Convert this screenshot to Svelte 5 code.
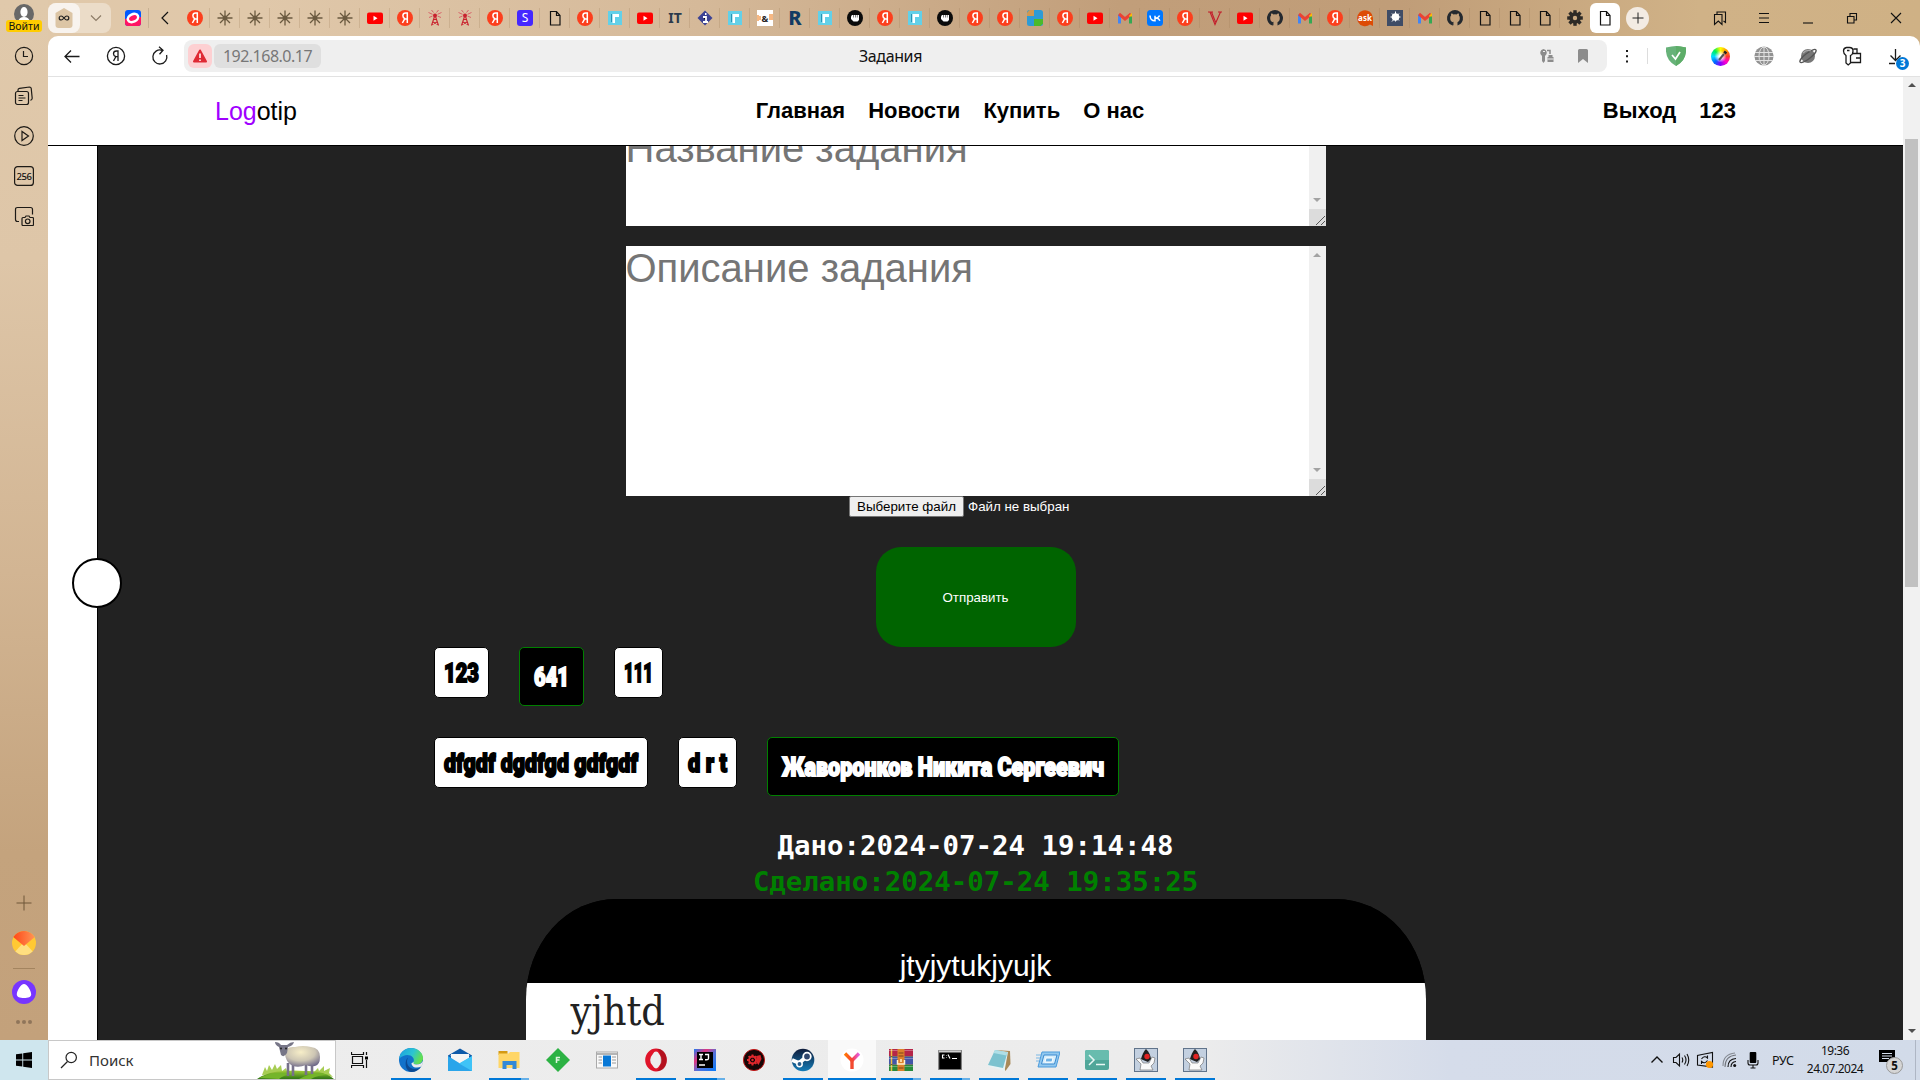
<script>
  const tabs = ('ya star star star star star yt ya tower tower ya s file ya r yt it info r amp bigr r fist ya r fist ya ya tiles ya yt gmail vk ya v yt git gmail ya ask dark gmail git file file file gear file').split(' ');

  const apps = [
    { icon: 'edge', run: 'one' },
    { icon: 'mail' },
    { icon: 'folder', run: 'many' },
    { icon: 'green' },
    { icon: 'window' },
    { icon: 'opera', run: 'one' },
    { icon: 'idea', run: 'many' },
    { icon: 'redgear' },
    { icon: 'steam', run: 'one' },
    { icon: 'yandex', run: 'active' },
    { icon: 'rar', run: 'many' },
    { icon: 'cmd', run: 'many' },
    { icon: 'note', run: 'one' },
    { icon: 'rundlg', run: 'one' },
    { icon: 'term', run: 'one' },
    { icon: 'duke', run: 'one' },
    { icon: 'duke', run: 'one' }
  ];

  const groups = [
    [
      { text: '123', w: 35 },
      { text: '641', w: 35, done: true },
      { text: '111', w: 29 }
    ],
    [
      { text: 'dfgdf dgdfgd gdfgdf', w: 194 },
      { text: 'd r t', w: 39 },
      { text: 'Жаворонков Никита Сергеевич', w: 322, done: true }
    ]
  ];

  const teeth = [0, 45, 90, 135, 180, 225, 270, 315];
</script>

{#snippet fav(name)}
  <svg class="fav" viewBox="0 0 16 16">
    {#if name === 'ya'}
      <circle cx="8" cy="8" r="8" fill="#fc3f1d" />
      <path d="M10.300 13V3H8.700C6.900 3 5.900 4.100 5.900 5.700c0 1.300.6 2.200 1.900 3L5.400 13M10 9H8" fill="none" stroke="#fff" stroke-width="1.500" />
    {:else if name === 'star'}
      <path d="M8 .5v15M.5 8h15M3 3l10 10M13 3L3 13" stroke="#6b5a40" stroke-width="1.300" />
      <circle cx="8" cy="8" r="2.400" fill="#6b5a40" />
    {:else if name === 'yt'}
      <rect x="0" y="2.500" width="16" height="11.500" rx="2" fill="#f00" />
      <path d="M6.500 5.800v5l4-2.500z" fill="#fff" />
    {:else if name === 'tower'}
      <path d="M8 5L4.500 15.500M8 5l3.500 10.500M6.500 9.500h3M6 12l5 2.500M10 12l-5 2.500" stroke="#c9222e" stroke-width="1.100" fill="none" />
      <path d="M1.500 2.500l4 1.800M14.500 2.500l-4 1.800M2 7.500l3.500-1.500M14 7.500L10.500 6M4.500 0l2 2.500M11.500 0l-2 2.500" stroke="#d8636a" stroke-width="1" />
      <circle cx="8" cy="5.500" r="2" fill="#c9222e" />
    {:else if name === 's'}
      <rect width="16" height="16" rx="3" fill="#4527ff" />
      <text x="8" y="12.200" text-anchor="middle" font-size="12" fill="#fff">S</text>
    {:else if name === 'file'}
      <path d="M3.500 1.500h6l3.500 4v9.500H3.500zM9.500 1.500v4H13" fill="none" stroke="#111" stroke-width="1.200" />
    {:else if name === 'r'}
      <rect x="1" y="1" width="14" height="14" fill="#63d0e8" />
      <path d="M5.500 4H8v9H5.500zM8 4h4v3H8z" fill="#fff" /><path d="M4.500 4v8" stroke="#2a93b5" stroke-width="1" />
    {:else if name === 'it'}
      <text x="8" y="13" text-anchor="middle" font-size="14" font-weight="700" fill="#2b3a4c">IT</text>
    {:else if name === 'info'}
      <path d="M8 .5L15.500 8 8 15.500.5 8z" fill="#3d4294" />
      <path d="M6 7h3v4.500M6 12h5M8 4h1.500" stroke="#fff" stroke-width="1.800" />
    {:else if name === 'amp'}
      <rect width="16" height="16" fill="#fff" />
      <path d="M1 5v6M3 6v4M13 4v6M15 4v6" stroke="#f3a05a" stroke-width="1.500" />
      <text x="8" y="11.500" text-anchor="middle" font-size="9" font-weight="700" fill="#222">&amp;</text>
    {:else if name === 'bigr'}
      <text x="8" y="15" text-anchor="middle" font-size="20" font-weight="800" fill="#123a63">R</text>
    {:else if name === 'fist'}
      <circle cx="8" cy="8" r="8" fill="#0b0b0b" />
      <path d="M4 6.500L5 5h7v5l-1.500 1.500h-4L4 9z" fill="#fff" /><path d="M6.500 5v2.500M8.500 5v2.500M10.300 5v2.500" stroke="#0b0b0b" stroke-width=".5" />
    {:else if name === 'tiles'}
      <rect width="16" height="16" rx="2.500" fill="#2e9bd6" />
      <path d="M2.500 0H7v6H0V2.500z" fill="#cf9853" /><path d="M7 9h9v4.500L13.500 16H7z" fill="#4aba2c" />
    {:else if name === 'gmail'}
      <path d="M2.500 13.500V4.500" stroke="#4285f4" stroke-width="3" /><path d="M13.500 13.500V4.500" stroke="#34a853" stroke-width="3" />
      <path d="M2 4l6 5 6-5" fill="none" stroke="#ea4335" stroke-width="3" /><path d="M12 5.700L15 3v3.500h-3z" fill="#fbbc04" />
    {:else if name === 'vk'}
      <rect width="16" height="16" rx="3.500" fill="#07f" />
      <path d="M3 5.500c.2 3.500 2 5.300 5 5.300v-5M8 8.200c2.200 0 3.800-1 4.600-2.700M9.500 7.900c1.500.3 2.700 1.300 3.400 2.900" fill="none" stroke="#fff" stroke-width="1.500" />
    {:else if name === 'v'}
      <path d="M1 2h5M11 2h4M3 2l5 12.500L13.500 2M4.500 2l4 10" fill="none" stroke="#c31f2b" stroke-width="1.100" />
    {:else if name === 'git'}
      <path d="M5.800 15.200v-2.500c-2 .5-2.500-.8-3.300-1.300" fill="none" stroke="#24292f" stroke-width="1.300" />
      <path d="M8 0a8 8 0 0 0-2.500 15.600V12.200C4 11.500 3.200 10.300 3.200 8c0-1 .3-1.900.9-2.500-.2-.8-.1-1.500.2-2.100 1 0 1.700.5 2.300 1a8 8 0 0 1 2.800 0c.6-.5 1.300-1 2.300-1 .3.600.4 1.300.2 2.100.6.600.9 1.500.9 2.500 0 2.300-.8 3.500-2.300 4.200v3.400A8 8 0 0 0 8 0z" fill="#24292f" />
    {:else if name === 'ask'}
      <path d="M16 8v8l-3-1.500A8 8 0 1 1 16 8z" fill="#dd4b05" />
      <text x="8" y="11" text-anchor="middle" font-size="8" font-weight="700" fill="#fff">ask</text>
    {:else if name === 'dark'}
      <rect width="16" height="16" fill="#3f4c66" /><circle cx="8.500" cy="7" r="3.800" fill="#fff" />
      <path d="M8.500 1.500v10M3.500 7h10M5 3.500l7 7M12 3.500l-7 8" stroke="#fff" stroke-width="1" />
    {:else if name === 'gear'}
      {#each teeth as a}<rect x="6.300" y=".2" width="3.400" height="4" fill="#2d2a26" transform="rotate({a} 8 8)" />{/each}
      <circle cx="8" cy="8" r="4" fill="none" stroke="#2d2a26" stroke-width="3.600" />
    {/if}
  </svg>
{/snippet}

{#snippet app(name)}
  <svg class="app-icon" viewBox="0 0 24 24">
    {#if name === 'edge'}
      <defs>
        <linearGradient id="eg1" x1="0" y1="0" x2="1" y2=".4"><stop offset="0" stop-color="#1b9de2" /><stop offset=".6" stop-color="#2cc4d2" /><stop offset="1" stop-color="#63df52" /></linearGradient>
      </defs>
      <circle cx="12" cy="12" r="12" fill="#1272cb" />
      <path d="M0 11C1 4 6 0 12 0c7 0 12 5 12 10 0 4-3 6.500-6.500 6.500-3 0-4-1-3-2.500C17 9 8 3 0 11z" fill="url(#eg1)" />
      <path d="M9 9.500c-3 6 1 11.500 7 11.500 3 0 5-1 6.500-2.500C20 22 16.500 24 12 24 6 23 5 13 9 9.500z" fill="#0c4a93" />
      <path d="M14.800 13.800c-1 1.500 0 3 3 2.800 2.600 0 4.800-1.200 6.200-3.600 0 2-.6 4-1.700 5.500-4 2-9 1.500-10-3z" fill="#ececec" />
    {:else if name === 'mail'}
      <path d="M0 7.500L12 .5l12 7V11H0z" fill="#0e5aa9" /><path d="M3 6h18v9H3z" fill="#f5f5f5" />
      <path d="M0 8l12 7.500L24 8v15H0z" fill="#2aa5ea" /><path d="M24 8v15L11 15.500z" fill="#3fc3f7" /><path d="M2 7.500h20L12 14z" fill="#f5f5f5" />
    {:else if name === 'folder'}
      <path d="M1.500 3h9v4h-9z" fill="#d49a13" /><path d="M1.500 5.500h10L13 4h9.500v16h-21z" fill="#ffd667" />
      <path d="M5.500 21v-8h14v8h-4v-4h-6v4z" fill="#3389d6" />
    {:else if name === 'green'}
      <path d="M12 0l12 12-12 12L0 12z" fill="#2cb244" /><path d="M10.500 15V9.500h3.500M10.500 12h3" fill="none" stroke="#dff5df" stroke-width="1.500" />
    {:else if name === 'window'}
      <rect x="1.500" y="4" width="21" height="16" fill="#f9f9f9" stroke="#aaa" /><path d="M2 6h20" stroke="#b5b5b5" stroke-width="2" /><path d="M3.500 9h3.500M3.500 12h3.500M3.500 15h3.500M17 9h4M17 12h4M17 15h4" stroke="#999" /><rect x="8" y="7.500" width="8" height="11" fill="#0878d6" />
    {:else if name === 'opera'}
      <ellipse cx="12" cy="12" rx="8.300" ry="9" fill="none" stroke="#e0142a" stroke-width="5" /><path d="M13 1c13-1 13 23 0 22 5-3 5-19 0-22z" fill="#9c1018" opacity=".65" />
      <ellipse cx="12" cy="12" rx="4.500" ry="8.500" fill="#ededed" />
    {:else if name === 'idea'}
      <defs><linearGradient id="ij" x1="0" y1="0" x2="1" y2="1"><stop offset="0" stop-color="#1c7ef5" /><stop offset=".3" stop-color="#e0357e" /><stop offset=".55" stop-color="#5672d9" /><stop offset="1" stop-color="#087cfa" /></linearGradient></defs>
      <rect x="1" y="1" width="22" height="22" fill="url(#ij)" /><rect x="4" y="4" width="16" height="16" fill="#000" />
      <path d="M6 6.500h4M8 6.500v5M6 11.500h4M12 6.500h3.500v4q0 1.300-2 1.300h-1.500M6 17h6" fill="none" stroke="#fff" stroke-width="1.400" />
    {:else if name === 'redgear'}
      <circle cx="12" cy="12" r="10.600" fill="#160707" stroke="#c21b1b" stroke-width="1" />
      {#each teeth as a}<path d="M9.500 6.500h2v3h-2z" fill="#e0282d" transform="rotate({a} 10.500 12)" />{/each}
      <circle cx="10.500" cy="12" r="3.500" fill="none" stroke="#e0282d" stroke-width="1.800" /><path d="M14.500 8l4-1 1 4-3 6-2.500-3z" fill="#d9262b" /><circle cx="10.500" cy="12" r="1.200" fill="#e0282d" />
    {:else if name === 'steam'}
      <defs><linearGradient id="st" x1="0" y1="0" x2="0" y2="1"><stop offset="0" stop-color="#101c3a" /><stop offset="1" stop-color="#157db8" /></linearGradient></defs>
      <circle cx="12" cy="12" r="11.300" fill="url(#st)" /><path d="M1 12l7 3 6-5" stroke="#fff" stroke-width="4" fill="none" />
      <circle cx="16" cy="8.500" r="3.800" fill="#31486e" stroke="#fff" stroke-width="1.800" /><circle cx="8.500" cy="16" r="2.700" fill="#285d8c" stroke="#fff" stroke-width="1.500" />
    {:else if name === 'yandex'}
      <defs><linearGradient id="yy"><stop offset="0" stop-color="#ff7a00" /><stop offset=".5" stop-color="#fa3d3d" /><stop offset="1" stop-color="#e560e5" /></linearGradient></defs>
      <circle cx="12" cy="12" r="11.500" fill="#fff" /><path d="M5 5.500l7 7 7-7" stroke="url(#yy)" stroke-width="3.400" fill="none" /><path d="M12 11.500v9.500" stroke="#f34b31" stroke-width="3.400" />
    {:else if name === 'rar'}
      <path d="M0 1h24v7H0z" fill="#b52548" /><path d="M0 9h24v7H0z" fill="#4256a8" /><path d="M0 17h24v6H0z" fill="#278a3c" />
      <path d="M2.500 1v22" stroke="#eebf42" stroke-width="1.500" /><path d="M0 2.500h24M0 10.500h24M0 18.500h24" stroke="#fff" opacity=".3" /><path d="M0 8.500h24M0 16.500h24" stroke="#222" opacity=".6" /><rect x="8.500" y="1" width="7" height="22" fill="#dc812a" /><path d="M8.500 12v4h7v-4M12 11v3" fill="none" stroke="#fff3d0" stroke-width="1.500" /><path d="M9.500 5h5M9.500 8h5M9.500 20h5" stroke="#7e421b" />
    {:else if name === 'cmd'}
      <rect x=".8" y="2.500" width="22.500" height="19" fill="#000" stroke="#777" /><path d="M1 3.500h22" stroke="#ccc" stroke-width="2" />
      <path d="M6.500 7H4.500v3h2M8.500 7.500v.5M8.500 9.500v.5M10 6.500l2 4M14 10.500h5" fill="none" stroke="#fff" stroke-width="1.100" />
    {:else if name === 'note'}
      <path d="M8 2l15 1 .5 13-5 7z" fill="#a88a59" /><path d="M8 2l13 2-3.500 19L1 18z" fill="#e6f3f5" /><path d="M8 2l12.500 2.500L16 20 1 17z" fill="#7cc2cf" /><path d="M8 2l12.500 2.500-1 3L6.500 5z" fill="#b0dfe7" />
    {:else if name === 'rundlg'}
      <path d="M6 4h18l-4 15H2z" fill="#92c8ef" stroke="#4b9bdc" /><path d="M8 7h13l-2.500 9H5.500z" fill="#d6edfb" stroke="#3c8bd0" /><path d="M10 10h7l-1 4H9z" fill="#6eb2e5" stroke="#fff" /><path d="M0 7h5M0 10h4M0 13h3" stroke="#7ab8e6" />
    {:else if name === 'term'}
      <rect y="2" width="24" height="20" rx="2" fill="#50a699" /><path d="M2 2h20q2 0 2 2v8H0V4q0-2 2-2z" fill="#68bcae" /><path d="M4 7l5 5-5 5M11 16.500h9" fill="none" stroke="#e8f7f4" stroke-width="1.500" />
    {:else if name === 'duke'}
      <rect x=".5" y=".5" width="23" height="23" fill="#c3d0e0" stroke="#61748b" />
      <path d="M2 11l4-1 3 5 6 0 3-6 3 1-1 5-3 3 2 4H6l1-6z" fill="#fafafa" stroke="#777" stroke-width=".7" />
      <path d="M12 1c3 3 4.500 6 5 10l-3 3-5-2-2-1c1-4 3-8 5-10z" fill="#202020" /><circle cx="13" cy="8.500" r="2.700" fill="#e12222" />
    {/if}
  </svg>
{/snippet}

<div class="screen">
  <div class="browser">
    <aside class="side">
      <div class="user">
        <svg viewBox="0 0 20 20" width="20" height="20"><circle cx="10" cy="10" r="10" fill="#686868" /><ellipse cx="10" cy="8" rx="3.600" ry="5" fill="#fff" /><path d="M4 18q1-5 6-5t6 5v2H4z" fill="#fff" /></svg>
        <span>Войти</span>
      </div>
      <div class="side-list">
        <svg viewBox="0 0 20 20"><circle cx="10" cy="10" r="8.600" /><path d="M9.500 5v5.500h4.500" /></svg>
        <svg viewBox="0 0 20 20"><rect x="1.500" y="5.500" width="13" height="13" rx="2" /><path d="M4 5V4q0-1.500 1.500-1.700l10-1.300q1.500 0 1.700 1.300l1 10q0 1.500-1.700 2M4.500 9.500h5M4.500 12h7M4.500 14.500h4" /></svg>
        <svg viewBox="0 0 20 20"><circle cx="10" cy="10" r="9.300" /><path d="M8 5.500v9l6.500-4.500z" /></svg>
        <svg viewBox="0 0 20 20"><rect x=".6" y=".6" width="18.800" height="18.800" rx="3" /><text x="10" y="13.700" text-anchor="middle" class="n256">256</text></svg>
        <svg viewBox="0 0 20 20"><path d="M5 15.500h-1.500q-2 0-2-2V3.500q0-2 2-2h13q2 0 2 2v5" /><path d="M8 12.500q0-1 1-1h2l1-1.500h3l1 1.500h2.500q1 0 1 1v6q0 1-1 1H9q-1 0-1-1z" /><circle cx="13.700" cy="15.300" r="2.300" /></svg>
      </div>
      <div class="side-bottom">
        <svg viewBox="0 0 16 16" width="16" height="16"><path d="M8 .5v15M.5 8h15" stroke="#6f5638" /></svg>
        <svg class="ymail" viewBox="0 0 24 24" width="24" height="24">
          <defs><linearGradient id="ym"><stop offset="0" stop-color="#fe4414" /><stop offset="1" stop-color="#ff9959" /></linearGradient><clipPath id="ymc"><circle cx="12" cy="12" r="12" /></clipPath></defs>
          <g clip-path="url(#ymc)"><path d="M0 0h24v24H0z" fill="#ffc933" /><path d="M0 24l12-13 12 13z" fill="#ffdf80" /><path d="M0 5V0h24v5L12 15z" fill="url(#ym)" /></g>
        </svg>
        <i class="rule"></i>
        <svg class="alice" viewBox="0 0 24 24" width="24" height="24"><circle cx="12" cy="12" r="12" fill="#7735ff" /><path d="M12 4c3 0 7.200 6.500 7.200 10.500 0 2.500-3 3.500-7.200 3.500s-7.200-1-7.200-3.500C4.800 10.500 9 4 12 4z" fill="#fff" /></svg>
        <svg class="more" viewBox="0 0 16 4" width="16" height="4"><circle cx="2" cy="2" r="2" /><circle cx="8" cy="2" r="2" /><circle cx="14" cy="2" r="2" /></svg>
      </div>
    </aside>

    <div class="main">
      <div class="tabbar">
        <div class="group">
          <span class="home"><svg viewBox="0 0 18 20" width="18" height="20"><path d="M9 0l8.500 5v12q0 3-3 3h-11q-3 0-3-3V5z" fill="#dcc5a5" /><path d="M9 10q-1.600-2-2.800-2a2 2 0 0 0 0 4q1.200 0 2.800-2t2.800-2a2 2 0 0 1 0 4q-1.200 0-2.800-2z" fill="none" stroke="#222" stroke-width="1.200" /></svg></span>
          <span class="down"><svg viewBox="0 0 12 8" width="12" height="8"><path d="M1 1.500l5 5 5-5" fill="none" stroke="#8d7c67" stroke-width="1.200" /></svg></span>
        </div>
        <div class="pinned"><svg class="fav" viewBox="0 0 16 16"><rect width="16" height="16" rx="3" fill="#0059ff" /><path d="M0 9v4q0 3 3 3h10q3 0 3-3V7z" fill="#ff1463" /><ellipse cx="8" cy="8" rx="5.400" ry="3.800" fill="#ff1463" stroke="#fff" stroke-width="2.500" transform="rotate(-25 8 8)" /></svg></div>
        <div class="prev"><svg viewBox="0 0 8 14" width="8" height="14"><path d="M7 1L1 7l6 6" fill="none" stroke="#111" stroke-width="1.200" /></svg></div>
        {#each tabs as t, i}
          <div class="tab" class:active={i === tabs.length - 1} class:last={i >= tabs.length - 2}>{@render fav(t)}</div>
        {/each}
        <div class="plus"><svg viewBox="0 0 12 12" width="12" height="12"><path d="M6 .5v11M.5 6h11" stroke="#222" /></svg></div>
        <div class="winctl">
          <svg viewBox="0 0 16 16"><path d="M5 4V2h8.500v10.500l-2-1.500M2.500 4.500h7.500v10l-3.700-3.500-3.800 3.500z" /></svg>
          <svg viewBox="0 0 16 16"><path d="M3 3.500h10M3 8h10M3 12.500h10" /></svg>
          <svg viewBox="0 0 16 16"><path d="M3 13h10" /></svg>
          <svg viewBox="0 0 16 16"><path d="M6 6V3.500h6.500V10H10M3.500 6.500H10V13H3.500z" /></svg>
          <svg viewBox="0 0 16 16"><path d="M3 3l10 10M13 3L3 13" /></svg>
        </div>
      </div>

      <div class="toolbar">
        <div class="cell"><svg viewBox="0 0 20 20"><path d="M17.500 10.500H3M9 4.500l-6 6 6 6" /></svg></div>
        <div class="cell"><svg viewBox="0 0 20 20"><circle cx="10" cy="10" r="8.600" /><path d="M12 15V5h-1.500Q7.500 5 7.500 7.700q0 2 2.300 3L7.500 15M12 10.700H9.800" /></svg></div>
        <div class="cell"><svg viewBox="0 0 20 20"><path d="M16.600 9A7 7 0 1 1 12 4.300M9 .8l4 3.500-3.500 4" /></svg></div>
        <div class="field">
          <span class="warn"><svg viewBox="0 0 16 16" width="16" height="16"><path d="M8 2.500l6 11H2z" fill="#df2a34" stroke="#df2a34" stroke-width="2" stroke-linejoin="round" /><path d="M8 5.500v4.500M8 11.500v1.500" stroke="#fff" stroke-width="1.500" /></svg></span>
          <span class="host">192.168.0.17</span>
          <span class="title">Задания</span>
          <svg class="fi" viewBox="0 0 16 16"><path d="M4.500 1a3.800 3.800 0 0 1 1.500 7v5l-1.500 2L3 13V8A3.800 3.800 0 0 1 4.500 1z" fill="#8c8c8c" /><path d="M4 3.500h2" stroke="#efefef" /><path d="M8 2.500h3V6" stroke="#8c8c8c" fill="none" stroke-width="1.500" /><path d="M9.500 7h4v2h1v5h-6V9h1z" fill="#8c8c8c" /><path d="M8.500 11h6" stroke="#efefef" /></svg>
          <svg class="fi" viewBox="0 0 16 16"><path d="M3 2.500Q3 1 4.500 1h7Q13 1 13 2.500V15l-5-4-5 4z" fill="#8c8c8c" /></svg>
        </div>
        <div class="cell dots"><svg viewBox="0 0 20 20"><path d="M10 4v2M10 9.200v2M10 14.500v2" stroke-width="2" /></svg></div>
        <i class="vr"></i>
        <div class="cell"><svg viewBox="0 0 20 20"><path d="M0 1.500Q6 0 10 0t10 1.500q1 13-10 18.500Q-1 14.500 0 1.500z" fill="#67b279" stroke="none" /><path d="M10 0q4 0 10 1.500 1 13-10 18.500z" fill="#5dad68" stroke="none" /><path d="M6 9l3.500 4L14 6" stroke="#fff" stroke-width="1.700" /></svg></div>
        <div class="cell"><div class="wheel"><svg viewBox="0 0 20 20"><path d="M8 13l5-6" stroke="#555" stroke-width="2" /><path d="M13.500 6.500l1.500-2" stroke="#222" stroke-width="3" /></svg></div></div>
        <div class="cell"><svg viewBox="0 0 20 20"><circle cx="10" cy="10" r="9.600" fill="#929292" stroke="none" /><g stroke="#e2e2e2" stroke-width="1"><ellipse cx="10" cy="10" rx="5" ry="9" /><path d="M10 0v20M1 6.500h18M0 10.500h20M1 14.500h18" /></g></svg></div>
        <div class="cell"><svg viewBox="0 0 20 20"><circle cx="10" cy="10" r="7" fill="#777" stroke="none" /><ellipse cx="10" cy="10" rx="10" ry="2.800" transform="rotate(-38 10 10)" stroke="#555" /><path d="M5 7q4-4 8-2" stroke="#aaa" /></svg></div>
        <div class="cell"><svg viewBox="0 0 20 20"><path d="M4 9.500Q1.500 8 1.500 5T4.500 1.500h3q3.500 0 3.500 3.500T8.500 9.500V17L6.200 19 4 17zM5 4.500h2.500M11.500 3h3.500v4M11 7.500h7.500V16.500H9M14 12h4.500" /></svg></div>
        <div class="cell dl"><svg viewBox="0 0 20 20"><path d="M9.500 3v11M4.500 9.500l5 5 5-5M3 17.500h6" /></svg><b>3</b></div>
      </div>

      <div class="viewport">
        <div class="page">
          <header>
            <div class="logo"><span>Log</span>otip</div>
            <nav><a>Главная</a><a>Новости</a><a>Купить</a><a>О нас</a></nav>
            <nav><a>Выход</a><a>123</a></nav>
          </header>
          <div class="content">
            <div class="drawer"><div class="knob"></div></div>
            <div class="column">
              <div class="area first"><span>Название задания</span><i class="bar"><i class="dn"></i></i></div>
              <div class="area second"><span>Описание задания</span><i class="bar"><i class="up"></i><i class="dn"></i></i></div>
              <div class="file"><span class="pick">Выберите файл</span><span class="none">Файл не выбран</span></div>
              <div class="send">Отправить</div>
              <div class="groups">
                {#each groups as row}
                  <div class="row">
                    {#each row as g}
                      <div class="tag" class:done={g.done}>
                        <svg width={g.w} height="30" class="imp"><text x="0" y="24.500" textLength={g.w} lengthAdjust="spacingAndGlyphs">{g.text}</text></svg>
                      </div>
                    {/each}
                  </div>
                {/each}
              </div>
              <div class="time">Дано:2024-07-24 19:14:48</div>
              <div class="time green">Сделано:2024-07-24 19:35:25</div>
              <div class="card"><div class="card-head">jtyjytukjyujk</div><div class="card-body">yjhtd</div></div>
            </div>
          </div>
        </div>
        <div class="scroll"><i class="up"></i><i class="thumb"></i><i class="dn"></i></div>
      </div>
    </div>
  </div>

  <div class="taskbar">
    <div class="start"><svg viewBox="0 0 16 16" width="16" height="16"><path d="M0 2.300l6.300-.9v6.100H0zM7.200 1.200L16 0v7.500H7.200zM0 8.500h6.300v6.100L0 13.700zM7.200 8.500H16V16l-8.800-1.200z" /></svg></div>
    <div class="search">
      <svg viewBox="0 0 18 18" width="18" height="18"><circle cx="11.200" cy="6.500" r="5.200" fill="none" stroke="#222" stroke-width="1.200" /><path d="M7.500 10.500L1 17" stroke="#222" stroke-width="1.200" /></svg>
      <span>Поиск</span>
      <svg class="sheep" viewBox="0 0 78 38" width="78" height="38">
        <defs>
          <linearGradient id="hill" x1="0" y1="0" x2="0" y2="1"><stop offset="0" stop-color="#a5cf3a" /><stop offset="1" stop-color="#2e7414" /></linearGradient>
          <radialGradient id="wool" cx=".45" cy=".3" r=".75"><stop offset="0" stop-color="#f7eec8" /><stop offset=".55" stop-color="#cdc6b4" /><stop offset="1" stop-color="#6d6788" /></radialGradient>
        </defs>
        <path d="M5 34l3-8 2 4 2-6 3 5 3-6 2 5 4-4 1 6 4-3 2 6zM56 32l5-5 1 3 5-5 0 5 6-3-1 5 4 4z" fill="#a7cd53" />
        <path d="M0 38q12-8 28-8 8-1 20 0 18-1 29 8z" fill="url(#hill)" /><path d="M2 37q16-8 34-4-10 1-14 5zM42 38q16-9 30-4-12 0-18 4z" fill="#74b52a" />
        <path d="M31 22v13M36 23v12M49 23v11M55 22v11" stroke="#77718a" stroke-width="2.600" />
        <path d="M28 12q0-7 10-6 8-2 16 0 9 1 9 10 0 8-5 9-5 1-9-1-7 3-13 1-8-4-8-13z" fill="url(#wool)" />
        <path d="M18 1q4 0 6 3h6q3-3 7-3-1 4-6 5l-1 6q-3 5-6 2l-2-8q-4-2-4-5z" fill="#777687" /><circle cx="24" cy="7.500" r="1" fill="#222" /><circle cx="29" cy="7.500" r="1" fill="#222" />
      </svg>
    </div>
    <div class="view"><svg viewBox="0 0 18 16" width="18" height="16"><path d="M1.500 4.500h10v7h-10zM.5 0v2.500h12V0M.5 16v-2.500h12V16M15.500 0v3M15.500 8v8" fill="none" stroke="#111" stroke-width="1.200" /><rect x="14" y="4.500" width="3" height="3" /></svg></div>
    <div class="apps">
      {#each apps as a}
        <div class="app {a.run ?? ''}">{@render app(a.icon)}</div>
      {/each}
    </div>
    <div class="tray">
      <svg class="t1" viewBox="0 0 16 16"><path d="M2.500 10.500L8 5l5.500 5.500" stroke-width="1.400" /></svg>
      <svg class="t2" viewBox="0 0 18 16"><path d="M1.500 5.500h2.500l3.500-3.500v12L4 10.500H1.500zM10 5.500q1.500 2.500 0 5M12.500 3.500q3 4.500 0 9M15 2q3.500 6 0 12" /></svg>
      <svg class="t3" viewBox="0 0 18 18"><path d="M6 3.500L16.500 1.500V16L1.500 14V4.500zM5.500 8q3-4 6-1V4.500M11.500 9.500q-3 4-6 1v2.500" /><circle cx="13.500" cy="13.500" r="3.600" fill="#ff9700" stroke="none" /></svg>
      <svg class="t4" viewBox="0 0 16 16"><path d="M3 15Q3 4 14 3" opacity=".5" /><path d="M6 15q0-8 8-8.500M9 15q0-5 5-5.500" /><path d="M1 14Q1 2 13 1" opacity=".4" /><circle cx="12.700" cy="13.500" r="1.500" fill="#111" stroke="none" /></svg>
      <svg class="t5" viewBox="0 0 12 18"><rect x="2.700" y="1" width="6.600" height="11" rx="1" fill="#000" stroke="none" /><path d="M1 9v3q0 2 2 2h6q2 0 2-2V9M6 14v3M3.500 17h5" /></svg>
      <span class="lang">РУС</span>
      <span class="clock">19:36<br />24.07.2024</span>
      <span class="notif"><svg viewBox="0 0 16 16" width="16" height="16"><path d="M0 0h16v12h-3v4l-4-4H0z" fill="#000" /><path d="M3 3.500h10M3 6h10M3 8.500h7" stroke="#d4dcea" /></svg><b>5</b></span>
      <i class="edge"></i>
    </div>
  </div>
</div>

<style>
  :global(body) { margin: 0; overflow: hidden; }
  * { box-sizing: border-box; }
  .screen { width: 1920px; height: 1080px; display: flex; flex-direction: column; overflow: hidden; font-family: "Noto Sans", "Open Sans", sans-serif; color: #111; }
  .browser { height: 1040px; display: flex; background: linear-gradient(90deg, #e0c8a9 0, #e0c8aa 260px, #d5b999 700px, #c19e7a 1120px, #c09d78 1400px, #d0b287 1700px, #cfb185 100%); }
  svg { display: block; flex: none; }

  .side { width: 48px; flex: none; display: flex; flex-direction: column; align-items: center; background: linear-gradient(#e0c9ab, #dec6a8 25%, #d2b593 55%, #c4a37d 82%, #c3a17b); }
  .user { height: 36px; padding-top: 4px; display: flex; flex-direction: column; align-items: center; }
  .user span { margin-top: -4px; width: 36px; height: 12px; border-radius: 3px; background: #ffcc00; font-size: 10.5px; line-height: 12px; text-align: center; position: relative; }
  .side-list { margin-top: 10px; display: flex; flex-direction: column; gap: 20px; }
  .side-list svg { width: 20px; height: 20px; fill: none; stroke: #1d1a16; stroke-width: 1.2; }
  .side-list .n256 { font-size: 9.5px; font-weight: 500; letter-spacing: -.4px; fill: #111; stroke: none; }
  .side-bottom { margin-top: auto; height: 145px; display: flex; flex-direction: column; align-items: center; }
  .ymail { margin-top: 20px; }
  .rule { margin-top: 13px; width: 22px; height: 1px; background: #a3845f; }
  .alice { margin-top: 11px; }
  .more { margin-top: 16px; fill: #8f755a; }

  .main { flex: 1; display: flex; flex-direction: column; min-width: 0; }
  .tabbar { height: 36px; flex: none; display: flex; align-items: center; }
  .fav { width: 16px; height: 16px; overflow: visible; }
  .group { width: 63px; height: 30px; border-radius: 8px; background: #ebdcc8; display: flex; }
  .home { width: 32px; border-radius: 8px; background: #f8f3ee; display: grid; place-items: center; }
  .down { flex: 1; display: grid; place-items: center; }
  .pinned { width: 38px; height: 20px; padding-left: 14px; border-right: 1px solid #c8b193; display: flex; align-items: center; }
  .prev { width: 31px; display: grid; place-items: center; }
  .tab { width: 30px; height: 20px; flex: none; display: flex; align-items: center; justify-content: center; border-right: 1px solid #9b78543d; padding-left: 1px; }
  .tab.last { border-color: transparent; }
  .tab.active { height: 30px; border: 0; padding: 0; background: #fff; border-radius: 6px; }
  .plus { margin-left: 6px; width: 23px; height: 23px; border-radius: 50%; background: #f3ebe3; display: grid; place-items: center; }
  .winctl { margin-left: auto; display: flex; gap: 28px; padding-right: 16px; }
  .winctl svg { width: 16px; height: 16px; fill: none; stroke: #111; stroke-width: 1.1; }

  .toolbar { height: 41px; flex: none; background: #fff; border-radius: 10px 10px 0 0; border-bottom: 1px solid #e2e2e2; display: flex; align-items: center; padding-left: 2px; }
  .cell { width: 44px; flex: none; display: grid; place-items: center; }
  .cell svg { width: 20px; height: 20px; fill: none; stroke: #1b1b1b; stroke-width: 1.3; }
  .dots { width: 40px; }
  .vr { width: 1px; height: 16px; background: #ddd; margin-right: 6px; }
  .field { margin-left: 2px; width: 1423px; height: 32px; border-radius: 8px; background: #efefef; display: flex; align-items: center; padding: 0 16px 0 4px; gap: 2px; }
  .warn { width: 24px; height: 24px; border-radius: 6px; background: #fdd0d2; display: grid; place-items: center; }
  .host { width: 107px; height: 24px; border-radius: 6px; background: #dfdfdf; color: #777; font-size: 16px; line-height: 24px; text-align: center; letter-spacing: -.5px; }
  .title { flex: 1; text-align: center; font-size: 16px; letter-spacing: -.4px; padding-right: 61px; }
  .fi { width: 16px; height: 16px; margin-left: 18px; }
  .wheel { width: 19px; height: 19px; border-radius: 50%; background: radial-gradient(circle, #fff 10%, transparent 45%), conic-gradient(#ff0, #f90, #f33, #f0c, #80f, #06f, #0df, #0e5, #ff0); }
  .dl { position: relative; }
  .dl b { position: absolute; left: 22px; top: 11px; width: 13px; height: 13px; border-radius: 50%; background: #0078d7; color: #fff; font-size: 10px; line-height: 13px; text-align: center; }

  .viewport { flex: 1; display: flex; min-height: 0; }
  .page { flex: 1; display: flex; flex-direction: column; font-family: "Liberation Sans", Arial, sans-serif; color: #000; }
  header { height: 69px; flex: none; background: #fff; border-bottom: 1px solid #000; display: flex; justify-content: space-between; align-items: center; padding: 0 167px; }
  .logo { font-size: 25px; }
  .logo span { color: #a000ff; }
  nav { display: flex; gap: 23px; font-size: 22px; font-weight: 700; }
  .content { flex: 1; display: flex; min-height: 0; background: #222; }
  .drawer { width: 50px; flex: none; background: #fff; border-right: 1px solid #000; position: relative; }
  .knob { position: absolute; left: 24px; top: 412px; width: 50px; height: 50px; border: 2px solid #000; border-radius: 50%; background: #fff; }
  .column { flex: 1; display: flex; flex-direction: column; align-items: center; padding-right: 50px; overflow: hidden; }
  .area { width: 700px; background: #fff; display: flex; justify-content: space-between; font-size: 40px; line-height: 44px; color: #757575; overflow: hidden; flex: none; }
  .first { height: 80px; }
  .first span { margin-top: -20px; }
  .second { height: 250px; margin-top: 20px; }
  .bar { width: 17px; background: #f0f0f0; display: flex; flex-direction: column; align-items: center; padding: 7px 0 20px; background: linear-gradient(135deg, transparent 0 48%, #555 48% 55%, transparent 55% 73%, #555 73% 80%, transparent 80%) right 1px bottom 1px / 9px 9px no-repeat, linear-gradient(#f0f0f0, #f0f0f0) top / 100% calc(100% - 17px) no-repeat, #dcdcdc; }
  .up, .dn { width: 0; height: 0; border: 4px solid transparent; }
  .up { border-top: 0; border-bottom: 4px solid #a3a3a3; }
  .dn { border-bottom: 0; border-top: 4px solid #a3a3a3; margin-top: auto; margin-bottom: 4px; }
  .file { height: 21px; width: 254px; display: flex; align-items: center; gap: 4px; font-size: 13.33px; flex: none; margin-left: 1px; }
  .pick { width: 115px; height: 21px; background: #efefef; border: 1px solid #767676; border-radius: 2px; text-align: center; line-height: 19px; white-space: nowrap; }
  .none { color: #fff; white-space: nowrap; }
  .send { width: 200px; height: 100px; margin-top: 30px; border-radius: 25px; background: #006400; color: #fff; font-size: 13.33px; line-height: 101px; text-align: center; flex: none; }
  .groups { width: 1083px; display: flex; flex-direction: column; gap: 31px; flex: none; }
  .row { height: 59px; display: flex; align-items: flex-start; gap: 30px; }
  .tag { border: 1px solid #000; border-radius: 5px; background: #fff; padding: 9px 9px 10px; height: 51px; }
  .tag.done { height: 59px; padding: 13px 14px; border-color: green; background: #000; }
  .imp { fill: #000; stroke: #000; stroke-width: 1.8px; font: 900 26px Roboto, Inter, sans-serif; overflow: visible; }
  .done .imp { fill: #fff; stroke: #fff; }
  .time { font: 700 27.4px/36px "DejaVu Sans Mono", monospace; color: #fff; flex: none; height: 36px; }
  .groups + .time { margin-top: 32px; }
  .time.green { color: green; }
  .card { width: 900px; height: 300px; flex: none; margin-top: -1px; border-radius: 90px / 100px; background: #000; overflow: hidden; }
  .card-head { height: 84px; background: #000; color: #fff; font-size: 30px; line-height: 34px; padding-top: 50px; text-align: center; }
  .card-body { height: 216px; padding-left: 45px; background: #fff; font: 41px/56px "DejaVu Serif Condensed", "DejaVu Serif", serif; font-stretch: condensed; color: #222; }

  .scroll { width: 17px; background: #f1f1f1; display: flex; flex-direction: column; align-items: center; padding: 6px 0 3px; }
  .scroll .up { border-bottom-color: #505050; }
  .scroll .dn { border-top-color: #505050; }
  .thumb { margin-top: 52px; width: 13px; height: 448px; background: #c1c1c1; }

  .taskbar { height: 40px; display: flex; background: linear-gradient(90deg, #ededed 0, #ececec 1200px, #d5dcea 1450px, #d2dbe9 100%); }
  .start { width: 48px; background: #cfe6ee; display: grid; place-items: center; }
  .search { width: 288px; background: #fff; border: 1px solid #c8c8c8; display: flex; align-items: center; padding-left: 11px; font-size: 15px; }
  .search span { margin-left: 11px; color: #333; }
  .sheep { margin-left: auto; }
  .view { width: 51px; padding-right: 3px; display: grid; place-items: center; }
  .apps { display: flex; gap: 1px; }
  .app { width: 48px; height: 40px; display: grid; place-items: center; background-repeat: no-repeat; background-position: 4px 38px; }
  .app-icon { width: 24px; height: 24px; }
  .app.one { background-image: linear-gradient(#0078d7, #0078d7); background-size: 40px 2px; }
  .app.many { background-image: linear-gradient(90deg, #0078d7 80%, #66b0e8 80%); background-size: 40px 2px; }
  .app.active { background: linear-gradient(#0078d7, #0078d7) 0 38px / 48px 2px no-repeat, #f9f9f9; }
  .tray { margin-left: auto; display: flex; align-items: center; }
  .tray svg { fill: none; stroke: #111; stroke-width: 1.1; }
  .t1 { width: 16px; margin-right: 7px; }
  .t2 { width: 18px; margin-right: 6px; }
  .t3 { width: 18px; margin-right: 8px; }
  .t4 { width: 16px; margin-right: 9px; }
  .t5 { width: 12px; height: 18px; margin-right: 13px; }
  .lang { width: 24px; font-size: 12.5px; letter-spacing: -.3px; }
  .clock { width: 70px; margin-left: 4px; text-align: center; font-size: 12px; line-height: 18px; letter-spacing: -.5px; white-space: nowrap; }
  .notif { margin-left: 9px; width: 28px; height: 20px; position: relative; }
  .tray .notif svg { stroke: none; }
  .notif b { position: absolute; left: 7px; top: 7px; width: 17px; height: 17px; border-radius: 50%; border: 1px solid #999; background: #d5d5d5; font-size: 11.5px; line-height: 15px; text-align: center; }
  .edge { width: 5px; height: 40px; margin-left: 8px; border-left: 1px solid #aeb6c4; }
</style>
